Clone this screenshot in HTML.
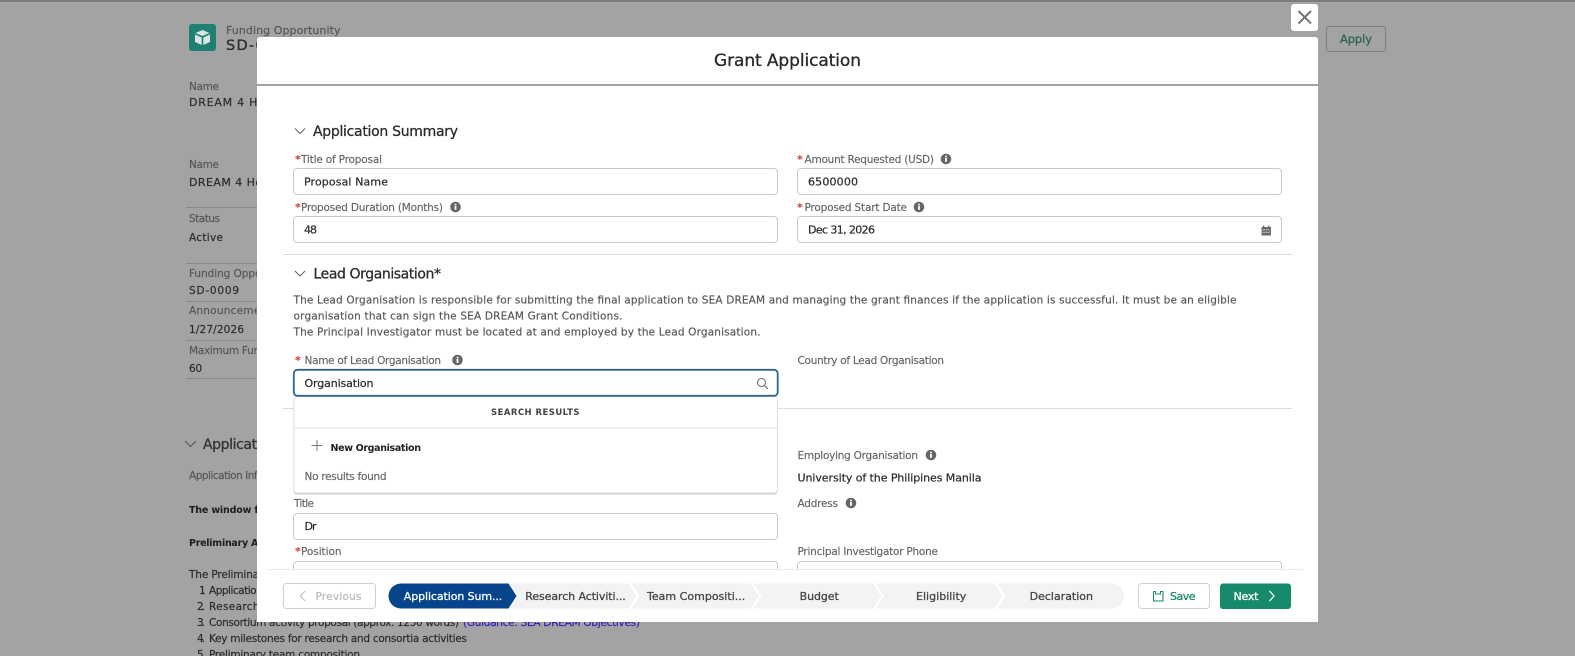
<!DOCTYPE html>
<html><head><meta charset="utf-8"><title>Grant Application</title>
<style>
html,body{margin:0;padding:0;background:#a3a3a3;width:1575px;height:656px;overflow:hidden}
svg{display:block;filter:blur(.3px)}
text{font-family:"DejaVu Sans","Liberation Sans",sans-serif;font-size:10.5px;fill:#333;white-space:pre}
.b{font-weight:bold}
.m{stroke:currentColor;stroke-width:.28px}
.l{fill:#666;color:#666;stroke:currentColor;stroke-width:.16px}
.d{fill:#555;color:#555;stroke:currentColor;stroke-width:.16px}
.v{fill:#2b2b2b;color:#2b2b2b;font-size:11px;stroke:currentColor;stroke-width:.22px}
.bg{fill:#2c2c2c;color:#2c2c2c;font-size:10.5px;stroke:currentColor;stroke-width:.2px}
.r{fill:#c23934;font-size:11px;font-weight:bold}
.in{fill:#fff;stroke:#c9c9c9;stroke-width:1}
.h{font-size:14px;fill:#2b2b2b;color:#2b2b2b}
.st{font-size:11px;fill:#444;color:#444}
</style></head><body>
<svg width="1575" height="656" viewBox="0 0 1575 656" xmlns="http://www.w3.org/2000/svg">
<defs>
<g id="info"><circle r="5.3" fill="#666"/><rect x="-.9" y="-1" width="1.8" height="3.8" fill="#fff"/><rect x="-.9" y="-3.2" width="1.8" height="1.5" fill="#fff"/></g>
<clipPath id="sc"><rect x="257" y="86" width="1061" height="483"/></clipPath>
</defs>
<rect width="1575" height="656" fill="#a3a3a3"/>
<rect width="1575" height="2" fill="#7c7c7c"/>

<!-- background page -->
<rect x="189" y="24" width="27" height="27" rx="3" fill="#1f8071"/>
<path d="M202.500 30l7 3-7 3-7-3z M195 34.500l6.700 3v7.500l-6.700-3z M210 34.500l-6.700 3v7.500l6.700-3z" fill="#d9e6e3"/>
<text x="226" y="34" class="d" style="font-size:11px" textLength="114.500">Funding Opportunity</text>
<text x="226" y="50" class="m" style="font-size:14.500px;color:#2b2b2b;fill:#2b2b2b" textLength="70">SD-0009</text>
<rect x="1326.500" y="26.500" width="59" height="25" rx="3" fill="none" stroke="#7f7f7f"/>
<text x="1340" y="43" class="m" style="font-size:11.500px;fill:#2f6350;color:#2f6350" textLength="32">Apply</text>

<text x="189" y="90" class="d" textLength="30">Name</text>
<text x="189" y="106" class="bg" style="font-size:11px" textLength="100">DREAM 4 Health</text>
<text x="189" y="168" class="d" textLength="30">Name</text>
<text x="189" y="186" class="bg" style="font-size:11px" textLength="96">DREAM 4 Health</text>
<rect x="186" y="207" width="71" height="1" fill="#8a8a8a"/>
<text x="189" y="222" class="d" textLength="31">Status</text>
<text x="189" y="241" class="bg" textLength="34">Active</text>
<rect x="186" y="263" width="71" height="1" fill="#8a8a8a"/>
<text x="189" y="277" class="d" textLength="107">Funding Opportunity</text>
<text x="189" y="294" class="bg" textLength="50">SD-0009</text>
<rect x="186" y="301" width="71" height="1" fill="#8a8a8a"/>
<text x="189" y="314" class="d" textLength="112">Announcement Date</text>
<text x="189" y="333" class="bg" textLength="55">1/27/2026</text>
<rect x="186" y="340" width="71" height="1" fill="#8a8a8a"/>
<text x="189" y="354" class="d" textLength="93">Maximum Funding</text>
<text x="189" y="372" class="bg" textLength="13">60</text>
<rect x="186" y="378" width="71" height="1" fill="#8a8a8a"/>

<path d="M185 441l5.500 5.500 5.500-5.500" fill="none" stroke="#555" stroke-width="1.100"/>
<text x="203" y="449" class="h m" style="fill:#333;color:#333;font-size:14px" textLength="155">Application Information</text>
<text x="189" y="479" class="d" textLength="112">Application Information</text>
<text x="189" y="513" class="b" style="fill:#1c1c1c;font-size:9.500px" textLength="142">The window for submission</text>
<text x="189" y="546" class="b" style="fill:#1c1c1c;font-size:9.500px" textLength="120">Preliminary Application</text>
<text x="189" y="578" class="bg" textLength="141">The Preliminary Application</text>
<text x="199" y="594" class="bg" textLength="6">1.</text>
<text x="209" y="594" class="bg" textLength="112">Application Information</text>
<text x="197" y="610" class="bg" textLength="8">2.</text>
<text x="209" y="610" class="bg" textLength="105">Research activities</text>
<text x="197" y="626" class="bg" textLength="8">3.</text>
<text x="209" y="626" class="bg" textLength="250">Consortium activity proposal (approx. 1250 words)</text>
<text x="463" y="626" class="bg" style="fill:#2a1fb5;color:#2a1fb5" textLength="177">(Guidance: SEA DREAM Objectives)</text>
<text x="197" y="642" class="bg" textLength="8">4.</text>
<text x="209" y="642" class="bg" textLength="258">Key milestones for research and consortia activities</text>
<text x="197" y="658" class="bg" textLength="8">5.</text>
<text x="209" y="658" class="bg" textLength="151">Preliminary team composition</text>

<!-- close -->
<rect x="1291" y="4" width="27" height="27" rx="3" fill="#fff"/>
<path d="M1298.500 11l12.500 12.500M1311 11l-12.500 12.500" stroke="#747474" stroke-width="2" fill="none"/>

<!-- modal -->
<path d="M260 37h1055a3 3 0 0 1 3 3v582h-1061v-582a3 3 0 0 1 3-3z" fill="#fff"/>
<rect x="257" y="84" width="1061" height="2" fill="#a3a3a3"/>
<text x="714" y="66" class="m" style="font-size:17px;fill:#2b2b2b;color:#2b2b2b;stroke-width:.35px" textLength="147">Grant Application</text>

<g clip-path="url(#sc)">
<path d="M295 128.500l5 5 5-5" fill="none" stroke="#666" stroke-width="1.100"/>
<text x="313" y="136" class="h m" textLength="145">Application Summary</text>
<text x="295" y="163" class="r">*</text><text x="301" y="163" class="l" textLength="81">Title of Proposal</text>
<rect class="in" x="293.500" y="168.500" width="484" height="26" rx="3.500"/>
<text x="304" y="185.500" class="v" textLength="84">Proposal Name</text>
<text x="797" y="163" class="r">*</text><text x="804.500" y="163" class="l" textLength="129.500">Amount Requested (USD)</text>
<use href="#info" x="946" y="159"/>
<rect class="in" x="797.500" y="168.500" width="484" height="26" rx="3.500"/>
<text x="808" y="185.500" class="v" textLength="50">6500000</text>

<text x="295" y="211" class="r">*</text><text x="301" y="211" class="l" textLength="142">Proposed Duration (Months)</text>
<use href="#info" x="455.500" y="207"/>
<rect class="in" x="293.500" y="216.500" width="484" height="26" rx="3.500"/>
<text x="304" y="233.500" class="v" textLength="13">48</text>
<text x="797" y="211" class="r">*</text><text x="804.500" y="211" class="l" textLength="102.500">Proposed Start Date</text>
<use href="#info" x="919" y="207"/>
<rect class="in" x="797.500" y="216.500" width="484" height="26" rx="3.500"/>
<text x="808" y="233.500" class="v" textLength="67">Dec 31, 2026</text>
<path d="M1261.500 227h9.500v8.500h-9.500z" fill="#6b6b6b"/><rect x="1263" y="225.500" width="1.300" height="2" fill="#6b6b6b"/><rect x="1268.200" y="225.500" width="1.300" height="2" fill="#6b6b6b"/><path d="M1262.500 229.800h7.500M1262.500 232.300h7.500" stroke="#fff" stroke-width=".8" stroke-dasharray="1 .9"/>
<rect x="283" y="254" width="1009" height="1" fill="#dcdcdc"/>

<path d="M295 271l5 5 5-5" fill="none" stroke="#666" stroke-width="1.100"/>
<text x="313.500" y="278.500" class="h m" textLength="127.500">Lead Organisation*</text>
<text x="293.500" y="303.500" class="d" textLength="943">The Lead Organisation is responsible for submitting the final application to SEA DREAM and managing the grant finances if the application is successful. It must be an eligible</text>
<text x="293.500" y="319.500" class="d" textLength="329">organisation that can sign the SEA DREAM Grant Conditions.</text>
<text x="293.500" y="335.500" class="d" textLength="467">The Principal Investigator must be located at and employed by the Lead Organisation.</text>

<text x="295" y="364" class="r">*</text><text x="304.500" y="364" class="l" textLength="136.500">Name of Lead Organisation</text>
<use href="#info" x="457.500" y="360"/>
<text x="797.500" y="364" class="l" textLength="146.500">Country of Lead Organisation</text>
<rect x="283" y="408" width="1009" height="1" fill="#dcdcdc"/>

<text x="797.500" y="459" class="l" textLength="120.500">Employing Organisation</text>
<use href="#info" x="931" y="455"/>
<text x="797.500" y="481.500" class="v" textLength="184">University of the Philipines Manila</text>
<text x="797.500" y="507" class="l" textLength="40.500">Address</text>
<use href="#info" x="851" y="503"/>
<text x="294" y="507" class="l" textLength="20">Title</text>
<rect class="in" x="293.500" y="513.500" width="484" height="26" rx="3.500"/>
<text x="304.500" y="530" class="v" textLength="12">Dr</text>
<text x="295" y="555" class="r">*</text><text x="301" y="555" class="l" textLength="40.500">Position</text>
<text x="797.500" y="555" class="l" textLength="140.500">Principal Investigator Phone</text>
<rect class="in" x="293.500" y="561.500" width="484" height="26" rx="3.500"/>
<rect class="in" x="797.500" y="561.500" width="484" height="26" rx="3.500"/>
</g>

<!-- dropdown -->
<rect x="294" y="396" width="483.500" height="97" rx="3" fill="#000" opacity=".18" transform="translate(0 1.500)"/>
<rect x="294" y="396" width="483.500" height="97" rx="3" fill="#fff" stroke="#d5d5d5" stroke-width=".8"/>
<rect x="293.800" y="369.800" width="483.900" height="26" rx="3.500" fill="#fff" stroke="#2f638f" stroke-width="1.800"/>
<text x="304.500" y="387" class="v" textLength="69">Organisation</text>
<circle cx="761.500" cy="382.500" r="4" fill="none" stroke="#6f6f6f" stroke-width="1.100"/><path d="M764.500 385.500l3.500 3.500" stroke="#6f6f6f" stroke-width="1.200"/>
<text x="491" y="415" class="b" style="font-size:8.500px;fill:#444" textLength="88.500">SEARCH RESULTS</text>
<rect x="295" y="427.500" width="482" height="1" fill="#e2e2e2"/>
<path d="M317 440v11M311.500 445.500h11" stroke="#777" stroke-width="1" fill="none"/>
<text x="330.500" y="451" class="b" style="font-size:9.500px;fill:#222" textLength="90.500">New Organisation</text>
<text x="304.500" y="480" class="l" textLength="82">No results found</text>

<!-- footer -->
<rect x="257" y="569" width="1061" height="53" fill="#fff"/>
<rect x="268" y="569" width="1035" height="1" fill="#ececec"/>
<rect x="283.500" y="583.500" width="92" height="25" rx="3" fill="#fff" stroke="#cfcfcf"/>
<path d="M305 591l-4.500 5 4.500 5" fill="none" stroke="#c4c4c4" stroke-width="1.300"/>
<text x="315.500" y="600" class="m" style="font-size:10.500px;fill:#bcbcbc;color:#bcbcbc" textLength="46">Previous</text>

<path d="M510 583.500h601.500a12.500 12.500 0 0 1 0 25h-601.500z" fill="#f3f3f3"/>
<path d="M630 583.500l8 12.500-8 12.500M752 583.500l8 12.500-8 12.500M874.500 583.500l8 12.500-8 12.500M996 583.500l8 12.500-8 12.500" fill="none" stroke="#fff" stroke-width="2.400"/>
<path d="M401 583.500h107.500l8 12.500-8 12.500h-107.500a12.500 12.500 0 0 1 0-25z" fill="#06458b"/>
<text x="403.800" y="600" class="m" style="font-size:11px;fill:#fff;color:#fff" textLength="98.500">Application Sum...</text>
<text x="525.300" y="600" class="st m" textLength="100.500">Research Activiti...</text>
<text x="647" y="600" class="st m" textLength="98.300">Team Compositi...</text>
<text x="799.600" y="600" class="st m" textLength="39.200">Budget</text>
<text x="916" y="600" class="st m" textLength="50.300">Eligibility</text>
<text x="1029.600" y="600" class="st m" textLength="63.400">Declaration</text>

<rect x="1138.500" y="583.500" width="71" height="25" rx="3" fill="#fff" stroke="#cfcfcf"/>
<path d="M1153.500 591.500v9.500h9.500v-9.500M1153.500 591.500h2v2.500h5v-2.500h2.500" fill="none" stroke="#1a8a6a" stroke-width="1.100"/>
<text x="1170" y="600" class="m" style="font-size:11px;fill:#1a8a6a;color:#1a8a6a" textLength="25.500">Save</text>
<rect x="1220" y="583.500" width="71" height="25.500" rx="3" fill="#178a6b"/>
<text x="1233.500" y="600" class="m" style="font-size:11px;fill:#fff;color:#fff" textLength="25">Next</text>
<path d="M1269.500 591l4.500 5-4.500 5" fill="none" stroke="#fff" stroke-width="1.300"/>
</svg>
</body></html>
